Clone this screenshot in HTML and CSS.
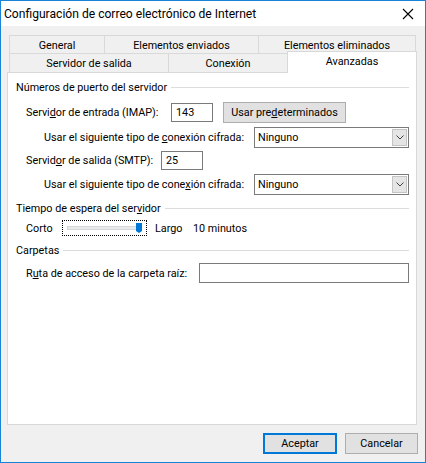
FILE: index.html
```html
<!DOCTYPE html>
<html lang="es">
<head>
<meta charset="utf-8">
<title>Configuración de correo electrónico de Internet</title>
<link rel="stylesheet" href="styles.css">
</head>
<body>
<div class="window">
  <div class="titlebar">
    <span class="title">Configuración de correo electrónico de Internet</span>
    <span class="close"><svg width="12" height="12" viewBox="0 0 12 12"><path d="M1 1L11 11M11 1L1 11" stroke="#000" stroke-width="1.1" fill="none"/></svg></span>
  </div>
  <div class="client">
    <div class="tabs">
      <div class="tabrow row-top">
        <div class="tab t-general">General</div>
        <div class="tab t-enviados">Elementos enviados</div>
        <div class="tab t-eliminados">Elementos eliminados</div>
      </div>
      <div class="tabrow row-bottom">
        <div class="tab t-salida">Servidor de salida</div>
        <div class="tab t-conexion">Conexión</div>
        <div class="tab t-avanzadas selected">Avanzadas</div>
      </div>
    </div>
    <div class="panel">
      <div class="group-header"><span>Números de puerto del servidor</span><span class="rule"></span></div>
      <div class="row row-imap">
        <span class="label lbl-imap">Servi<u>d</u>or de entrada (IMAP):</span>
        <span class="textbox tb-port">143</span>
        <span class="btn btn-defaults">Usar pre<u>d</u>eterminados</span>
      </div>
      <div class="row row-sub">
        <span class="label lbl-sub">Usar el siguiente tipo de <u>c</u>onexión cifrada:</span>
        <span class="combo"><span class="combo-text">Ninguno</span><span class="combo-arrow"><svg width="8" height="5" viewBox="0 0 8 5"><path d="M0.5 0.5L4 4L7.5 0.5" stroke="#444" stroke-width="1" fill="none"/></svg></span></span>
      </div>
      <div class="row row-smtp">
        <span class="label lbl-smtp">Servid<u>o</u>r de salida (SMTP):</span>
        <span class="textbox tb-port">25</span>
      </div>
      <div class="row row-sub row-sub2">
        <span class="label lbl-sub">Usar el siguiente tipo de cone<u>x</u>ión cifrada:</span>
        <span class="combo"><span class="combo-text">Ninguno</span><span class="combo-arrow"><svg width="8" height="5" viewBox="0 0 8 5"><path d="M0.5 0.5L4 4L7.5 0.5" stroke="#444" stroke-width="1" fill="none"/></svg></span></span>
      </div>
      <div class="group-header gh-timeout"><span>Tiempo de espera del ser<u>v</u>idor</span><span class="rule"></span></div>
      <div class="row row-slider">
        <span class="label lbl-corto">Corto</span>
        <span class="slider"><span class="track"></span><span class="thumb"></span></span>
        <span class="label lbl-largo">Largo</span>
        <span class="label">10 minutos</span>
      </div>
      <div class="group-header gh-folders"><span>Carpetas</span><span class="rule"></span></div>
      <div class="row row-root">
        <span class="label lbl-root">R<u>u</u>ta de acceso de la carpeta raíz:</span>
        <span class="textbox tb-root"></span>
      </div>
    </div>
    <div class="footer">
      <span class="btn btn-ok">Aceptar</span>
      <span class="btn btn-cancel">Cancelar</span>
    </div>
  </div>
</div>
</body>
</html>
```

FILE: styles.css
```css
* { box-sizing: border-box; }
html, body { margin: 0; padding: 0; }
body {
  font-family: "Segoe UI", Roboto, "Noto Sans", sans-serif;
  font-size: 10.8px;
  color: #000;
  background: #f0f0f0;
}
u { text-decoration: underline; text-underline-offset: 1px; }

.window {
  width: 426px;
  height: 463px;
  border: 1px solid #1883d7;
  background: #f0f0f0;
  display: flex;
  flex-direction: column;
}

.titlebar {
  height: 25px;
  background: #fff;
  display: flex;
  align-items: center;
  padding-left: 3px;
  flex: none;
}
.title {
  font-size: 12.1px;
  flex: 1;
}
.close {
  width: 46px;
  height: 24px;
  display: flex;
  align-items: center;
  justify-content: center;
  margin-right: -6px;
}

.client {
  flex: 1;
  padding: 9px 7px 0 6px;
  display: flex;
  flex-direction: column;
}

.tabs {
  margin-left: 2px;
}
.tabrow {
  display: flex;
}
.row-top { height: 18px; }
.row-bottom {
  height: 19px;
  align-items: flex-end;
}
.tab {
  height: 100%;
  border: 1px solid #d9d9d9;
  border-bottom: none;
  background: #f0f0f0;
  display: flex;
  align-items: center;
  justify-content: center;
  margin-left: -1px;
  padding-top: 1px;
  white-space: nowrap;
}
.tab:first-child { margin-left: 0; }
.t-general { width: 96px; }
.t-enviados { width: 155px; }
.t-eliminados { width: 158px; }
.t-salida { width: 160px; }
.t-conexion { width: 120px; }
.tab.selected {
  width: 130px;
  height: 22px;
  margin-bottom: -1px;
  background: #fff;
  position: relative;
  z-index: 1;
  padding-top: 0;
  padding-bottom: 2px;
}

.panel {
  margin-left: 0;
  width: 410px;
  height: 353px;
  background: #fff;
  border: 1px solid #d9d9d9;
  padding: 6px 7px 0 8px;
  flex: none;
}

.group-header {
  height: 16px;
  display: flex;
  align-items: center;
  white-space: nowrap;
}
.group-header .rule {
  flex: 1;
  height: 1px;
  background: #dcdcdc;
  margin-left: 4px;
  margin-top: 1px;
}

.row {
  display: flex;
  align-items: center;
  white-space: nowrap;
}
.label { flex: none; }

.row-imap { height: 20px; margin-top: 7px; padding-left: 10px; }
.lbl-imap { width: 145px; }
.row-sub { height: 20px; margin-top: 5px; padding-left: 28px; }
.row-sub2 { margin-top: 4px; }
.row-smtp { height: 20px; margin-top: 3px; padding-left: 10px; }
.lbl-smtp { width: 135px; }

.textbox {
  height: 19px;
  border: 1px solid #7a7a7a;
  background: #fff;
  display: flex;
  align-items: center;
  padding-left: 4px;
}
.tb-port { width: 42px; }

.btn {
  height: 21px;
  border: 1px solid #adadad;
  background: #e1e1e1;
  display: flex;
  align-items: center;
  justify-content: center;
  white-space: nowrap;
}
.btn-defaults {
  width: 123px;
  margin-left: 10px;
}

.combo {
  margin-left: auto;
  width: 155px;
  height: 21px;
  border: 1px solid #7a7a7a;
  background: #fff;
  display: flex;
  align-items: center;
  padding-left: 3px;
}
.combo-text { flex: 1; }
.combo-arrow {
  width: 15px;
  height: 17px;
  margin-right: 1px;
  background: #e5e5e5;
  border: 1px solid #c4c4c4;
  display: flex;
  align-items: center;
  justify-content: center;
}

.gh-timeout { margin-top: 6px; }
.row-slider { height: 18px; margin-top: 3px; padding-left: 10px; }
.lbl-corto { width: 36px; }
.slider {
  width: 85px;
  height: 16px;
  border: 1px dotted #000;
  display: flex;
  align-items: center;
  padding-left: 4px;
  position: relative;
}
.track {
  width: 73px;
  height: 4px;
  background: #e7eaea;
  border: 1px solid #d6d6d6;
}
.thumb {
  position: absolute;
  left: 73px;
  top: 2px;
  width: 6px;
  height: 10px;
  background: #0078d7;
  clip-path: polygon(0 0, 100% 0, 100% 80%, 50% 100%, 0 80%);
}
.lbl-largo { margin-left: 8px; width: 38px; }

.gh-folders { margin-top: 5px; }
.row-root { height: 20px; margin-top: 5px; padding-left: 10px; }
.lbl-root { width: 173px; }
.tb-root { flex: 1; height: 20px; }

.footer {
  display: flex;
  justify-content: flex-end;
  gap: 8px;
  margin-top: 8px;
  margin-right: 0;
}
.btn-ok {
  width: 74px;
  border: 2px solid #0078d7;
}
.btn-cancel { width: 73px; }
```
